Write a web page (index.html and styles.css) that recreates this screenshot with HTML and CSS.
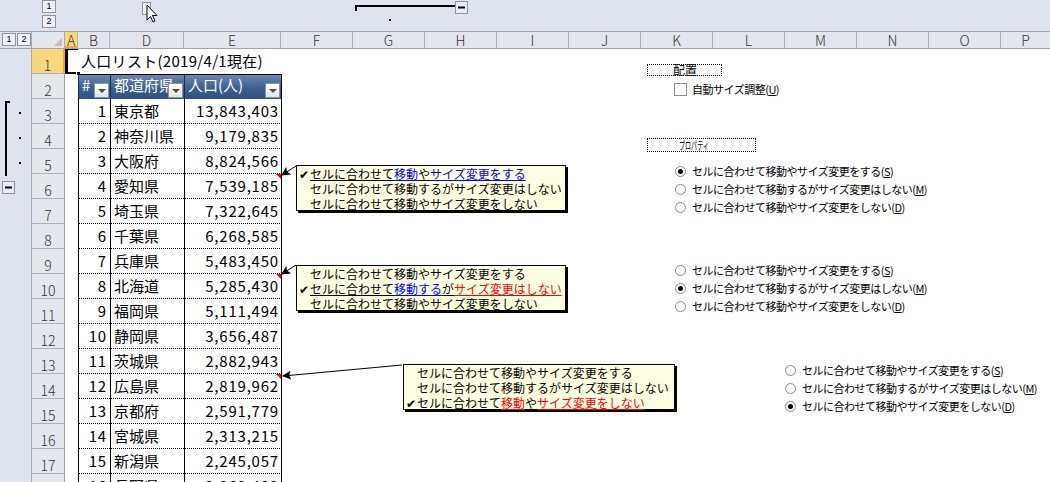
FILE: index.html
```html
<!DOCTYPE html>
<html lang="ja">
<head>
<meta charset="utf-8">
<title>人口リスト</title>
<link rel="stylesheet" href="styles.css">
</head>
<body>
<div class="app">
  <div class="otop">
    <div class="otop-gap"></div>
    <div class="otop-lv">
      <div class="lvbtn">1</div>
      <div class="lvbtn">2</div>
    </div>
    <svg class="otop-svg" width="985" height="31" viewBox="0 0 985 31">
      <rect x="77.5" y="2.5" width="8" height="12" fill="#eef0f5" stroke="#8e939c"/>
      <path d="M82 5 L82 20 L85.5 16.5 L88 22 L90 21 L87.5 15.5 L92 15.5 Z" fill="#fff" stroke="#000" stroke-width="1" stroke-linejoin="round"/>
      <rect x="290" y="5" width="2" height="6" fill="#000"/>
      <rect x="290" y="5" width="100" height="2" fill="#000"/>
      <rect x="390.5" y="1.5" width="12" height="12" fill="#e9ecf2" stroke="#8e939c"/>
      <rect x="393" y="6.5" width="7" height="2" fill="#000"/>
      <rect x="324" y="19" width="2" height="2" fill="#000"/>
    </svg>
  </div>

  <div class="chead">
    <div class="ch-lv">
      <div class="lvbtn h">1</div>
      <div class="lvbtn h">2</div>
    </div>
    <div class="ch-corner"><span class="corner-tri"></span></div>
    <div class="ch w-a sel">A</div>
    <div class="ch w-b">B</div>
    <div class="ch w-d">D</div>
    <div class="ch w-e">E</div>
    <div class="ch w-n">F</div>
    <div class="ch w-n">G</div>
    <div class="ch w-n">H</div>
    <div class="ch w-n">I</div>
    <div class="ch w-n">J</div>
    <div class="ch w-n">K</div>
    <div class="ch w-n">L</div>
    <div class="ch w-n">M</div>
    <div class="ch w-n">N</div>
    <div class="ch w-n">O</div>
    <div class="ch w-n last">P</div>
  </div>

  <div class="main">
    <div class="ogut">
      <svg class="ogut-svg" width="31" height="160" viewBox="0 0 31 160">
        <rect x="5" y="52" width="2" height="75" fill="#000"/>
        <rect x="5" y="52" width="5" height="2" fill="#000"/>
        <rect x="19" y="63" width="2" height="2" fill="#000"/>
        <rect x="19" y="88" width="2" height="2" fill="#000"/>
        <rect x="19" y="113" width="2" height="2" fill="#000"/>
        <rect x="2.5" y="132.5" width="12" height="12" fill="#e9ecf2" stroke="#8e939c"/>
        <rect x="5" y="137.5" width="7" height="2" fill="#000"/>
      </svg>
    </div>

    <div class="rhead">
      <div class="rh sel">1</div>
      <div class="rh">2</div>
      <div class="rh">3</div>
      <div class="rh">4</div>
      <div class="rh">5</div>
      <div class="rh">6</div>
      <div class="rh">7</div>
      <div class="rh">8</div>
      <div class="rh">9</div>
      <div class="rh">10</div>
      <div class="rh">11</div>
      <div class="rh">12</div>
      <div class="rh">13</div>
      <div class="rh">14</div>
      <div class="rh">15</div>
      <div class="rh">16</div>
      <div class="rh">17</div>
      <div class="rh">18</div>
    </div>

    <div class="sheet">
      <div class="r">
        <div class="c w-a cursor-cell"><span class="fill-handle"></span></div>
        <div class="c title">人口リスト(2019/4/1現在)</div>
      </div>
      <div class="r">
        <div class="c w-a"></div>
        <div class="c w-b th">#<span class="dd"></span></div>
        <div class="c w-d th">都道府県<span class="dd"></span></div>
        <div class="c w-e th last">人口(人)<span class="dd"></span></div>
      </div>
      <div class="r"><div class="c w-a"></div><div class="c w-b td num">1</div><div class="c w-d td">東京都</div><div class="c w-e td num last">13,843,403</div></div>
      <div class="r"><div class="c w-a"></div><div class="c w-b td num">2</div><div class="c w-d td">神奈川県</div><div class="c w-e td num last">9,179,835</div></div>
      <div class="r"><div class="c w-a"></div><div class="c w-b td num">3</div><div class="c w-d td">大阪府</div><div class="c w-e td num last">8,824,566</div></div>
      <div class="r"><div class="c w-a"></div><div class="c w-b td num">4</div><div class="c w-d td">愛知県</div><div class="c w-e td num last cmt">7,539,185</div></div>
      <div class="r"><div class="c w-a"></div><div class="c w-b td num">5</div><div class="c w-d td">埼玉県</div><div class="c w-e td num last">7,322,645</div></div>
      <div class="r"><div class="c w-a"></div><div class="c w-b td num">6</div><div class="c w-d td">千葉県</div><div class="c w-e td num last">6,268,585</div></div>
      <div class="r"><div class="c w-a"></div><div class="c w-b td num">7</div><div class="c w-d td">兵庫県</div><div class="c w-e td num last">5,483,450</div></div>
      <div class="r"><div class="c w-a"></div><div class="c w-b td num">8</div><div class="c w-d td">北海道</div><div class="c w-e td num last cmt">5,285,430</div></div>
      <div class="r"><div class="c w-a"></div><div class="c w-b td num">9</div><div class="c w-d td">福岡県</div><div class="c w-e td num last">5,111,494</div></div>
      <div class="r"><div class="c w-a"></div><div class="c w-b td num">10</div><div class="c w-d td">静岡県</div><div class="c w-e td num last">3,656,487</div></div>
      <div class="r"><div class="c w-a"></div><div class="c w-b td num">11</div><div class="c w-d td">茨城県</div><div class="c w-e td num last">2,882,943</div></div>
      <div class="r"><div class="c w-a"></div><div class="c w-b td num">12</div><div class="c w-d td">広島県</div><div class="c w-e td num last cmt">2,819,962</div></div>
      <div class="r"><div class="c w-a"></div><div class="c w-b td num">13</div><div class="c w-d td">京都府</div><div class="c w-e td num last">2,591,779</div></div>
      <div class="r"><div class="c w-a"></div><div class="c w-b td num">14</div><div class="c w-d td">宮城県</div><div class="c w-e td num last">2,313,215</div></div>
      <div class="r"><div class="c w-a"></div><div class="c w-b td num">15</div><div class="c w-d td">新潟県</div><div class="c w-e td num last">2,245,057</div></div>
      <div class="r"><div class="c w-a"></div><div class="c w-b td num">16</div><div class="c w-d td">長野県</div><div class="c w-e td num last">2,063,403</div></div>

      <svg class="arrows" width="985" height="433" viewBox="0 0 985 433">
        <defs>
          <marker id="ah" markerWidth="9" markerHeight="9" refX="8" refY="4.5" orient="auto" markerUnits="userSpaceOnUse">
            <path d="M0 0 L9 4.5 L0 9 L2 4.5 Z" fill="#000"/>
          </marker>
        </defs>
        <line x1="231" y1="117" x2="217" y2="126" stroke="#000" stroke-width="1" marker-end="url(#ah)"/>
        <line x1="231" y1="216" x2="217" y2="225" stroke="#000" stroke-width="1" marker-end="url(#ah)"/>
        <line x1="337" y1="316" x2="218" y2="327" stroke="#000" stroke-width="1" marker-end="url(#ah)"/>
      </svg>

      <div class="note n1">
        <div class="nl on"><span class="chk">✔</span><span class="k">セルに合わせて</span><span class="b">移動</span><span class="k">や</span><span class="b">サイズ変更をする</span></div>
        <div class="nl">セルに合わせて移動するがサイズ変更はしない</div>
        <div class="nl">セルに合わせて移動やサイズ変更をしない</div>
      </div>
      <div class="note n2">
        <div class="nl">セルに合わせて移動やサイズ変更をする</div>
        <div class="nl on"><span class="chk">✔</span><span class="k">セルに合わせて</span><span class="b">移動する</span><span class="k">が</span><span class="rd">サイズ変更はしない</span></div>
        <div class="nl">セルに合わせて移動やサイズ変更をしない</div>
      </div>
      <div class="note n3">
        <div class="nl">セルに合わせて移動やサイズ変更をする</div>
        <div class="nl">セルに合わせて移動するがサイズ変更はしない</div>
        <div class="nl on"><span class="chk">✔</span><span class="k">セルに合わせて</span><span class="rd">移動</span><span class="k">や</span><span class="rd">サイズ変更をしない</span></div>
      </div>

      <div class="grp g-haichi"><span>配置</span></div>
      <div class="chkrow"><span class="cbox"></span><span class="ft">自動サイズ調整(<u>U</u>)</span></div>
      <div class="grp g-prop"><span class="narrow">プロパティ</span></div>

      <div class="radios r1">
        <div class="rad"><span class="rb on"></span><span class="ft">セルに合わせて移動やサイズ変更をする(<u>S</u>)</span></div>
        <div class="rad"><span class="rb"></span><span class="ft">セルに合わせて移動するがサイズ変更はしない(<u>M</u>)</span></div>
        <div class="rad"><span class="rb"></span><span class="ft">セルに合わせて移動やサイズ変更をしない(<u>D</u>)</span></div>
      </div>
      <div class="radios r2">
        <div class="rad"><span class="rb"></span><span class="ft">セルに合わせて移動やサイズ変更をする(<u>S</u>)</span></div>
        <div class="rad"><span class="rb on"></span><span class="ft">セルに合わせて移動するがサイズ変更はしない(<u>M</u>)</span></div>
        <div class="rad"><span class="rb"></span><span class="ft">セルに合わせて移動やサイズ変更をしない(<u>D</u>)</span></div>
      </div>
      <div class="radios r3">
        <div class="rad"><span class="rb"></span><span class="ft">セルに合わせて移動やサイズ変更をする(<u>S</u>)</span></div>
        <div class="rad"><span class="rb"></span><span class="ft">セルに合わせて移動するがサイズ変更はしない(<u>M</u>)</span></div>
        <div class="rad"><span class="rb on"></span><span class="ft">セルに合わせて移動やサイズ変更をしない(<u>D</u>)</span></div>
      </div>
    </div>
  </div>
</div>
</body>
</html>
```
FILE: styles.css
```css
* { box-sizing: border-box; margin: 0; padding: 0; }
html, body { width: 1050px; height: 482px; overflow: hidden; background: #fff; }
body { font-family: "Noto Sans CJK JP", "Noto Sans", sans-serif; color: #000; }

.app { width: 1050px; height: 482px; display: flex; flex-direction: column; overflow: hidden; }

/* top outline area */
.otop { height: 31px; flex: none; display: flex; background: #dfe3ee; }
.otop-gap { width: 31px; flex: none; }
.otop-lv { width: 34px; flex: none; display: flex; flex-direction: column; gap: 2px; padding-left: 11px; }
.otop-svg { display: block; flex: none; }

.lvbtn {
  width: 14px; height: 13px; border: 1px solid #8e939c; background: #eef0f5;
  font: 9px/11px "Liberation Sans", sans-serif; text-align: center; color: #000;
}
.lvbtn.h { width: 14px; height: 13px; }

/* column header row */
.chead {
  height: 18px; flex: none; display: flex;
  border-top: 1px solid #9ea4ae; border-bottom: 1px solid #9ea4ae;
  background: #e3e6ec;
}
.ch-lv { width: 31px; flex: none; display: flex; gap: 1px; padding: 1px 0 0 2px; background: #dfe3ee; }
.ch-corner { width: 34px; flex: none; position: relative; border-left: 1px solid #a6acb6; border-right: 1px solid #a6acb6; }
.corner-tri {
  position: absolute; right: 2px; bottom: 2px; width: 0; height: 0;
  border-left: 8px solid transparent; border-bottom: 8px solid #b9bec8;
}
.ch {
  flex: none; height: 100%; border-right: 1px solid #abb1bb;
  font-size: 14px; line-height: 17px; color: #333; text-align: center; font-weight: 300;
}
.ch.sel { background: #f9d77a; border-bottom: 2px solid #f0a640; line-height: 16px; }
.ch.last { flex: 1; border-right: none; }

.w-a { width: 13px; }
.w-b { width: 32px; }
.w-d { width: 74px; }
.w-e { width: 97px; }
.w-n { width: 72px; }

/* main */
.main { flex: 1; display: flex; min-height: 0; }
.ogut { width: 31px; flex: none; background: #dfe3ee; }
.ogut-svg { display: block; }

.rhead { width: 34px; flex: none; background: #e4e7ec; border-left: 1px solid #a6acb6; border-right: 1px solid #9aa0aa; }
.rh {
  height: 25px; border-bottom: 1px solid #abb1bb;
  font-size: 14px; line-height: 20px; padding-top: 6px; text-align: center; color: #333; font-weight: 300;
}
.rh.sel { background: #f9d77a; border-right: 2px solid #f0a640; margin-right: -1px; }

.sheet { flex: 1; position: relative; min-width: 0; }
.r { display: flex; height: 25px; }
.c { flex: none; height: 25px; }
.w-e.c { width: 98px; }

.cursor-cell { position: relative; border-left: 3px solid #000; border-bottom: 2px solid #000; border-top: 1px solid #000; }
.fill-handle { position: absolute; right: -3px; bottom: -4px; width: 5px; height: 5px; background: #000; border: 1px solid #fff; }

.title { font-size: 15px; line-height: 24px; padding-left: 3px; white-space: nowrap; letter-spacing: 0.3px; }

.th {
  position: relative;
  background: linear-gradient(#6a89b3, #3c5f8d 55%, #2e5180);
  color: #fff; font-size: 15px; line-height: 20px; padding-left: 3px;
  border-top: 1px solid #000; border-left: 1px solid #1b2f4c; white-space: nowrap; overflow: hidden;
}
.th.last { border-right: 1px solid #000; }
.dd {
  position: absolute; right: 1px; bottom: 1px; width: 15px; height: 15px;
  background: linear-gradient(#ffffff, #dfe3e8); border: 1px solid #8c939d;
}
.dd::after {
  content: ""; position: absolute; left: 3px; top: 5px; width: 0; height: 0;
  border-left: 4px solid transparent; border-right: 4px solid transparent; border-top: 4px solid #4d4d4d;
}

.td {
  font-size: 15px; line-height: 24px; border-left: 1px solid #000; border-bottom: 1px dotted #000;
  padding-left: 3px; white-space: nowrap; position: relative;
}
.td.num { text-align: right; padding-right: 3px; padding-left: 0; letter-spacing: 0.8px; }
.td.last { border-right: 1px solid #000; padding-right: 2px; }
.cmt::after {
  content: ""; position: absolute; top: 0; right: 0; width: 0; height: 0;
  border-top: 5px solid #f00; border-left: 5px solid transparent;
}

/* comments */
.arrows { position: absolute; left: 0; top: 0; pointer-events: none; }
.note {
  position: absolute; width: 270px; height: 46px; background: #ffffe1;
  border: 1px solid #000; box-shadow: 2px 2px 0 #000;
  font-size: 12px; line-height: 15px; padding-left: 13px; white-space: nowrap;
}
.n1 { left: 231px; top: 116px; }
.n2 { left: 231px; top: 216px; }
.n3 { left: 338px; top: 315px; width: 272px; }
.nl { height: 15px; }
.nl.on { margin-left: -11px; }
.chk { display: inline-block; width: 11px; font-family: "DejaVu Sans", sans-serif; font-size: 12px; font-weight: 700; line-height: 15px; }
.k { text-decoration: underline; }
.b { color: #0000ff; text-decoration: underline; }
.rd { color: #ff0000; text-decoration: underline; }

/* form controls */
.grp { position: absolute; border: 1px dotted #000; font-size: 12px; line-height: 10px; white-space: nowrap; }
.g-haichi { left: 582px; top: 15px; width: 75px; height: 12px; padding-left: 25px; }
.g-prop { left: 582px; top: 89px; width: 109px; height: 14px; padding-left: 31px; line-height: 12px; }
.narrow { display: inline-block; font-size: 11px; transform: scaleX(0.55); transform-origin: 0 50%; }

.chkrow { position: absolute; left: 609px; top: 32px; display: flex; align-items: center; gap: 5px; }
.cbox { width: 13px; height: 13px; border: 1px solid #8a8a8a; background: #fff; }
.ft { font-size: 11px; line-height: 16px; letter-spacing: -0.5px; white-space: nowrap; }

.radios { position: absolute; display: flex; flex-direction: column; }
.r1 { left: 610px; top: 113px; }
.r2 { left: 610px; top: 212px; }
.r3 { left: 720px; top: 312px; }
.rad { height: 18px; display: flex; align-items: center; gap: 6px; }
.rb { width: 11px; height: 11px; border: 1px solid #8a8a8a; border-radius: 50%; background: #fff; position: relative; flex: none; }
.rb.on::after { content: ""; position: absolute; left: 2px; top: 2px; width: 5px; height: 5px; border-radius: 50%; background: #000; }
```
